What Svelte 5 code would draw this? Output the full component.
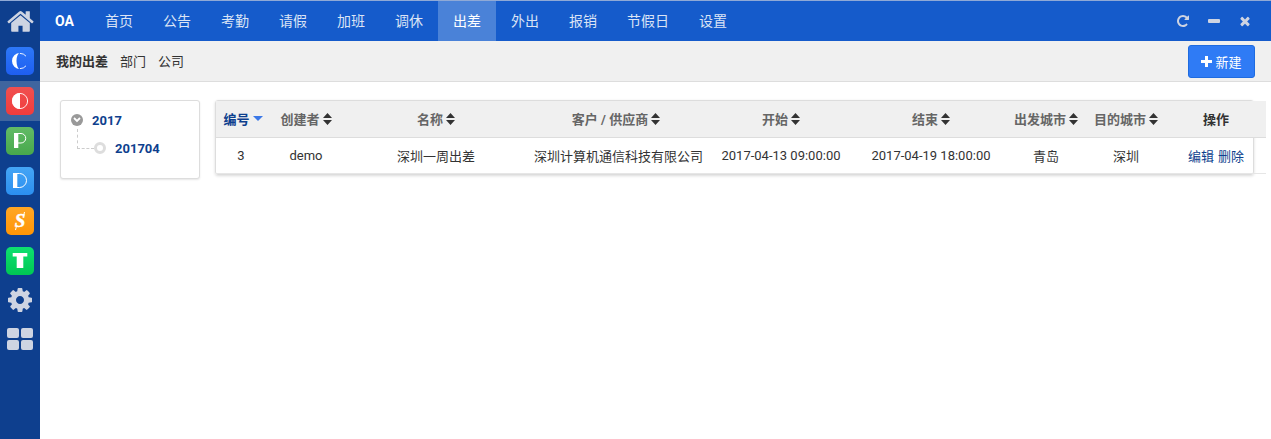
<script lang="ts">
  const nav = ['首页', '公告', '考勤', '请假', '加班', '调休', '出差', '外出', '报销', '节假日', '设置'];
  const activeNav = '出差';
  const tabs = ['我的出差', '部门', '公司'];
  const apps = [
    { name: 'c' },
    { name: 'o', active: true },
    { name: 'p' },
    { name: 'd' },
    { name: 's' },
    { name: 't' },
  ];
  const columns = [
    { label: '编号', sort: 'desc' },
    { label: '创建者', sort: 'both' },
    { label: '名称', sort: 'both' },
    { label: '客户 / 供应商', sort: 'both' },
    { label: '开始', sort: 'both' },
    { label: '结束', sort: 'both' },
    { label: '出发城市', sort: 'both' },
    { label: '目的城市', sort: 'both' },
    { label: '操作', sort: '' },
  ];
  const row = ['3', 'demo', '深圳一周出差', '深圳计算机通信科技有限公司', '2017-04-13 09:00:00', '2017-04-19 18:00:00', '青岛', '深圳'];
</script>

<div class="shell">
  <aside class="rail">
    <button class="rail-btn" aria-label="首页">
      <svg width="29" height="29" viewBox="0 0 1792 1792"><path fill="#ced4e2" d="M1472 992v480q0 26-19 45t-45 19h-384v-384h-256v384h-384q-26 0-45-19t-19-45v-480q0-1 .5-3t.5-3l575-474 575 474q1 2 1 6zm223-69l-62 74q-8 9-21 11h-3q-13 0-21-7l-692-577-692 577q-12 8-24 7-13-2-21-11l-62-74q-8-10-7-23.500t11-21.500l719-599q32-26 76-26t76 26l244 204v-195q0-14 9-23t23-9h192q14 0 23 9t9 23v408l219 182q10 8 11 21.500t-7 23.500z"/></svg>
    </button>
    {#each apps as app}
      <button class="rail-btn" class:active={app.active} aria-label={app.name}>
        <span class="tile {app.name}">
          <svg width="20" height="20" viewBox="0 0 20 20" fill="#fff" stroke="none">
            {#if app.name === 'c'}
              <path d="M10 2A8 8 0 0 0 10 18A3.500 8 0 0 1 10 2z"/>
              <path d="M10 2.400a7.600 7.600 0 0 1 6 2.800M10 17.600a7.600 7.600 0 0 0 6-2.800" fill="none" stroke="#fff" stroke-width="0.9"/>
            {:else if app.name === 'o'}
              <circle cx="10" cy="10" r="7.600" fill="none" stroke="#fff" stroke-width="0.9"/>
              <path d="M10 2a8 8 0 0 0 0 16z"/>
            {:else if app.name === 'p'}
              <rect x="4" y="2" width="4.300" height="15"/>
              <path d="M8 2.500h3a4.750 4.750 0 0 1 0 9.500h-3" fill="none" stroke="#fff"/>
            {:else if app.name === 'd'}
              <rect x="3" y="2" width="4.300" height="15"/>
              <path d="M7 2.500h2.500a7 7 0 0 1 0 14h-2.500" fill="none" stroke="#fff"/>
            {:else if app.name === 's'}
              <text x="10" y="16" text-anchor="middle" class="s-letter">S</text>
              <path d="M14.500 1l-1 4M5.500 19l1-4" fill="none" stroke="#fff"/>
            {:else}
              <rect x="2.700" y="2" width="14.600" height="3.500"/>
              <rect x="6.700" y="5" width="6.600" height="12"/>
            {/if}
          </svg>
        </span>
      </button>
    {/each}
    <button class="rail-btn cog" aria-label="设置">
      <svg width="28" height="28" viewBox="0 0 1792 1792"><path fill="#ced4e2" d="M1152 896q0-106-75-181t-181-75-181 75-75 181 75 181 181 75 181-75 75-181zm512-109v222q0 12-8 23t-20 13l-185 28q-19 54-39 91 35 50 107 138 10 12 10 25t-9 23q-27 37-99 108t-94 71q-12 0-26-9l-138-108q-44 23-91 38-16 136-29 186-7 28-36 28h-222q-14 0-24.500-8.500t-11.500-21.500l-28-184q-49-16-90-37l-141 107q-10 9-25 9-14 0-25-11-126-114-165-168-7-10-7-23 0-12 8-23 15-21 51-66.500t54-70.500q-27-50-41-99l-183-27q-13-2-21-12.500t-8-23.500v-222q0-12 8-23t19-13l186-28q14-46 39-92-40-57-107-138-10-12-10-24 0-10 9-23 26-36 98.500-107.500t94.500-71.500q13 0 26 10l138 107q44-23 91-38 16-136 29-186 7-28 36-28h222q14 0 24.500 8.500t11.500 21.500l28 184q49 16 90 37l142-107q9-9 24-9 13 0 25 10 129 119 165 170 7 8 7 22 0 12-8 23-15 21-51 66.500t-54 70.500q26 50 41 98l183 28q13 2 21 12.500t8 23.500z"/></svg>
    </button>
    <button class="rail-btn" aria-label="应用">
      <span class="grid-icon"><i></i><i></i><i></i><i></i></span>
    </button>
  </aside>

  <div class="main">
    <header class="topbar">
      <span class="brand">OA</span>
      {#each nav as item}
        <a class="nav-item" class:current={item === activeNav} href="#top">{item}</a>
      {/each}
      <div class="win-actions">
        <svg width="14" height="14" viewBox="0 0 1792 1792"><path fill="#ced4e2" d="M1664 256v448q0 26-19 45t-45 19h-448q-42 0-59-40-17-39 14-69l138-138q-148-137-349-137-104 0-198.500 40.500t-163.500 109.500-109.500 163.500-40.500 198.500 40.500 198.500 109.500 163.500 163.500 109.500 198.500 40.500q119 0 225-52t179-147q7-10 23-12 15 0 25 9l137 138q9 8 9.500 20.500t-7.500 22.500q-109 132-264 204.500t-327 72.500q-156 0-298-61t-245-164-164-245-61-298 61-298 164-245 245-164 298-61q147 0 284.500 55.500t244.500 156.500l130-129q29-31 70-14 39 17 39 59z"/></svg>
        <svg width="12" height="12" viewBox="0 0 12 12"><rect y="4" width="12" height="4" rx="1" fill="#ced4e2"/></svg>
        <svg width="14" height="14" viewBox="0 0 1792 1792"><path fill="#ced4e2" d="M1490 1322q0 40-28 68l-136 136q-28 28-68 28t-68-28l-294-294-294 294q-28 28-68 28t-68-28l-136-136q-28-28-28-68t28-68l294-294-294-294q-28-28-28-68t28-68l136-136q28-28 68-28t68 28l294 294 294-294q28-28 68-28t68 28l136 136q28 28 28 68t-28 68l-294 294 294 294q28 28 28 68z"/></svg>
      </div>
    </header>

    <div class="subbar">
      {#each tabs as tab, i}
        <a class="tab" class:selected={i === 0} href="#top">{tab}</a>
      {/each}
      <button class="new-btn">
        <svg width="11" height="11" viewBox="0 0 11 11"><path fill="#fff" d="M4 0h3v4h4v3H7v4H4V7H0V4h4z"/></svg>
        新建
      </button>
    </div>

    <div class="content">
      <div class="tree">
        <div class="year">
          <span class="toggle">
            <svg width="8" height="6" viewBox="0 0 8 6"><path d="M1 1l3 3 3-3" fill="none" stroke="#fff" stroke-width="1.800"/></svg>
          </span>
          2017
        </div>
        <div class="month">
          <span class="connector"></span>
          <span class="dot"></span>
          201704
        </div>
      </div>

      <div class="table-card">
        <div class="cells head">
          {#each columns as col}
            <div class="cell" class:sorted={col.sort === 'desc'}>
              {col.label}
              {#if col.sort === 'desc'}
                <svg class="caret" width="10" height="5" viewBox="0 0 10 5"><path fill="#3b78e7" d="M0 0h10L5 5z"/></svg>
              {:else if col.sort === 'both'}
                <svg class="caret" width="9" height="12" viewBox="0 0 9 12"><path fill="#333" d="M4.500 0L9 5H0zM0 7h9l-4.500 5z"/></svg>
              {/if}
            </div>
          {/each}
        </div>
        <div class="cells body">
          {#each row as value}
            <div class="cell">{value}</div>
          {/each}
          <div class="cell links"><a href="#top">编辑</a><a href="#top">删除</a></div>
        </div>
      </div>
    </div>
  </div>
</div>

<style>
  :global(body) {
    background: #fff;
    font-family: "Roboto", "Noto Sans CJK SC", sans-serif;
    font-size: 13px;
    color: #333;
  }

  .shell {
    display: flex;
    height: 439px;
    overflow: hidden;
  }

  /* left app rail */
  .rail {
    width: 40px;
    flex-shrink: 0;
    background: #0e3f8e;
    border-top: 1px solid #8fa9d6;
    display: flex;
    flex-direction: column;
  }

  .rail-btn {
    width: 40px;
    height: 40px;
    padding: 0;
    border: none;
    background: transparent;
    display: flex;
    align-items: center;
    justify-content: center;
  }

  .rail-btn.cog {
    height: 38px;
  }

  .rail-btn.active {
    background: #3f659f;
  }

  .tile {
    width: 28px;
    height: 28px;
    border-radius: 5px;
    display: flex;
    align-items: center;
    justify-content: center;
  }

  .tile svg {
    overflow: visible;
  }

  .tile.c { background: linear-gradient(#2d78f8, #1e5ef0); }
  .tile.o { background: linear-gradient(#f05050, #f13c3c); }
  .tile.p { background: linear-gradient(#62bb66, #47a84c); }
  .tile.d { background: linear-gradient(#45a5f5, #2b8ff0); }
  .tile.s { background: linear-gradient(#ffa726, #ff9505); }
  .tile.t { background: linear-gradient(#0ee070, #00c853); }

  .s-letter {
    font-family: "Liberation Serif", serif;
    font-size: 19px;
    font-weight: 700;
    font-style: italic;
    stroke: #fff;
    stroke-width: 0.5px;
  }

  .grid-icon {
    display: grid;
    grid-template-columns: 12px 12px;
    grid-auto-rows: 10px;
    gap: 2px;
  }

  .grid-icon i {
    background: #ced4e2;
    border-radius: 2px;
  }

  .main {
    flex: 1;
    min-width: 0;
  }

  /* top navigation */
  .topbar {
    height: 40px;
    background: #155bcb;
    border-top: 1px solid #8fa9d6;
    display: flex;
    align-items: stretch;
    font-size: 14px;
  }

  .brand {
    color: #fff;
    font-weight: 700;
    padding: 0 15px;
    line-height: 40px;
    width: 20px;
  }

  .nav-item {
    color: #dbe4f5;
    text-decoration: none;
    padding: 0 15px;
    line-height: 40px;
  }

  .nav-item.current {
    background: #4a82d8;
    color: #fff;
  }

  .win-actions {
    margin-left: auto;
    display: flex;
    align-items: center;
    gap: 18px;
    padding-right: 19px;
  }

  /* secondary bar */
  .subbar {
    height: 40px;
    background: #f0f0f0;
    border-bottom: 1px solid #ddd;
    display: flex;
    align-items: center;
    gap: 12px;
    padding: 0 16px;
  }

  .tab {
    color: #333;
    text-decoration: none;
    margin-bottom: 1px;
  }

  .tab.selected {
    font-weight: 700;
  }

  .new-btn {
    margin-left: auto;
    width: 67px;
    height: 33px;
    background: #2f7bf5;
    border: 1px solid #1e6be0;
    border-radius: 3px;
    color: #fff;
    font: inherit;
    display: flex;
    align-items: center;
    justify-content: center;
    gap: 3px;
    padding: 0;
  }

  .content {
    display: flex;
    align-items: flex-start;
    gap: 15px;
    padding: 18px 0 0 20px;
  }

  /* year tree */
  .tree {
    box-sizing: border-box;
    width: 140px;
    height: 79px;
    background: #fff;
    border: 1px solid #ddd;
    border-radius: 3px;
    box-shadow: 0 1px 2px rgba(0, 0, 0, 0.1);
    font-weight: 700;
    color: #0e3f8e;
    padding: 11px 0 0 10px;
    flex-shrink: 0;
  }

  .year {
    display: flex;
    align-items: center;
    gap: 9px;
    height: 16px;
  }

  .toggle {
    width: 12px;
    height: 12px;
    border-radius: 50%;
    background: #999;
    display: flex;
    align-items: center;
    justify-content: center;
  }

  .month {
    position: relative;
    display: flex;
    align-items: center;
    height: 16px;
    margin-top: 12px;
    padding-left: 23px;
    gap: 9px;
  }

  .connector {
    position: absolute;
    left: 6px;
    top: -11px;
    width: 16px;
    height: 19px;
    border-left: 1px dashed #ccc;
    border-bottom: 1px dashed #ccc;
  }

  .dot {
    box-sizing: border-box;
    width: 12px;
    height: 12px;
    border: 3px solid #ddd;
    border-radius: 50%;
  }

  /* table */
  .table-card {
    box-sizing: border-box;
    width: 1039px;
    border: 1px solid #ddd;
    border-radius: 3px;
    box-shadow: 0 1px 3px rgba(0, 0, 0, 0.15);
    flex-shrink: 0;
  }

  .cells {
    display: grid;
    grid-template-columns: 50px 80px 180px 180px 150px 150px 80px 80px 100px;
    width: 1050px;
  }

  .head {
    height: 36px;
    background: #f0f0f0;
    border-bottom: 1px solid #ddd;
    font-weight: 700;
    color: #666;
  }

  .body {
    height: 35px;
    border-bottom: 1px solid #e6e6e6;
  }

  .cell {
    display: flex;
    align-items: center;
    justify-content: center;
    gap: 3px;
    white-space: nowrap;
  }

  .head .cell {
    padding-bottom: 1px;
  }

  .head .cell.sorted {
    color: #0e3f8e;
    padding-left: 4px;
  }

  .head .cell:last-child {
    color: #333;
  }

  .body .cell:nth-child(4) {
    padding-left: 5px;
  }

  .links {
    gap: 4px;
  }

  .links a {
    color: #0e3f8e;
    text-decoration: none;
  }
</style>
